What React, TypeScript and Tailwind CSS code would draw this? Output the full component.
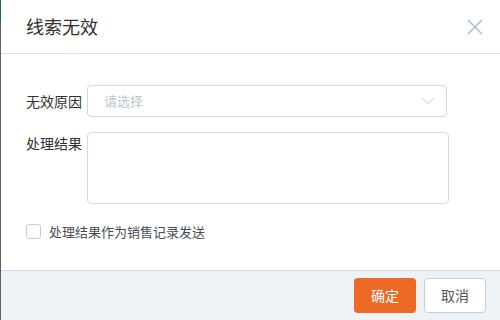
export default function App() {
  return (
    <div
      className="flex h-[320px] w-[500px] overflow-hidden bg-white text-[#303133]"
      style={{ fontFamily: '"Noto Sans CJK SC", "Liberation Sans", sans-serif' }}
    >
      <div className="flex w-px flex-col bg-[#5f5f5f]">
        <div className="h-[22px] bg-[#1f6b3a]" />
      </div>
      <div className="flex flex-1 flex-col">
        <div className="flex h-[54px] items-center justify-between border-b border-[#dcdfe6] pl-[25px] pr-[17px]">
          <span className="text-[18px]">线索无效</span>
          <svg className="h-[16px] w-[16px] text-[#b4bccc]" viewBox="0 0 16 16" fill="none" stroke="currentColor" strokeWidth={1.6}>
            <path d="M1 1l14 14M15 1L1 15" />
          </svg>
        </div>

        <div className="flex flex-1 flex-col pl-[25px] pt-[31px]">
          <div className="flex items-center">
            <span className="w-[61px] text-[14px]">无效原因</span>
            <div className="flex h-[32px] w-[360px] items-center justify-between rounded-[4px] border border-[#d4d7e0] pl-[16px] pr-[12px]">
              <span className="text-[13px] text-[#c0c4cc]">请选择</span>
              <svg className="h-[6px] w-[12px] text-[#c0c4cc]" viewBox="0 0 12 6" fill="none" stroke="currentColor" strokeWidth={1}>
                <path d="M0.5 0.5L6 5.5L11.5 0.5" />
              </svg>
            </div>
          </div>

          <div className="mt-[15px] flex items-start">
            <span className="w-[61px] pt-[1px] text-[14px] leading-[20px]">处理结果</span>
            <div className="h-[72px] w-[362px] rounded-[4px] border border-[#d4d7e0]" />
          </div>

          <div className="mt-[18px] flex items-center">
            <div className="h-[15px] w-[15px] rounded-[3px] border border-[#c8ccd4] bg-white" />
            <span className="ml-[8px] text-[13px] text-[#494c55]">处理结果作为销售记录发送</span>
          </div>
        </div>

        <div className="flex h-[50px] items-center justify-end gap-[8px] border-t border-[#d8dce5] bg-[#eff2f5] pr-[14px]">
          <button className="h-[35px] w-[62px] rounded-[4px] bg-[#ec6a26] text-[14px] text-white">确定</button>
          <button className="h-[35px] w-[62px] rounded-[4px] border border-[#c8ccd4] bg-white text-[14px] text-[#555]">取消</button>
        </div>
      </div>
    </div>
  );
}
